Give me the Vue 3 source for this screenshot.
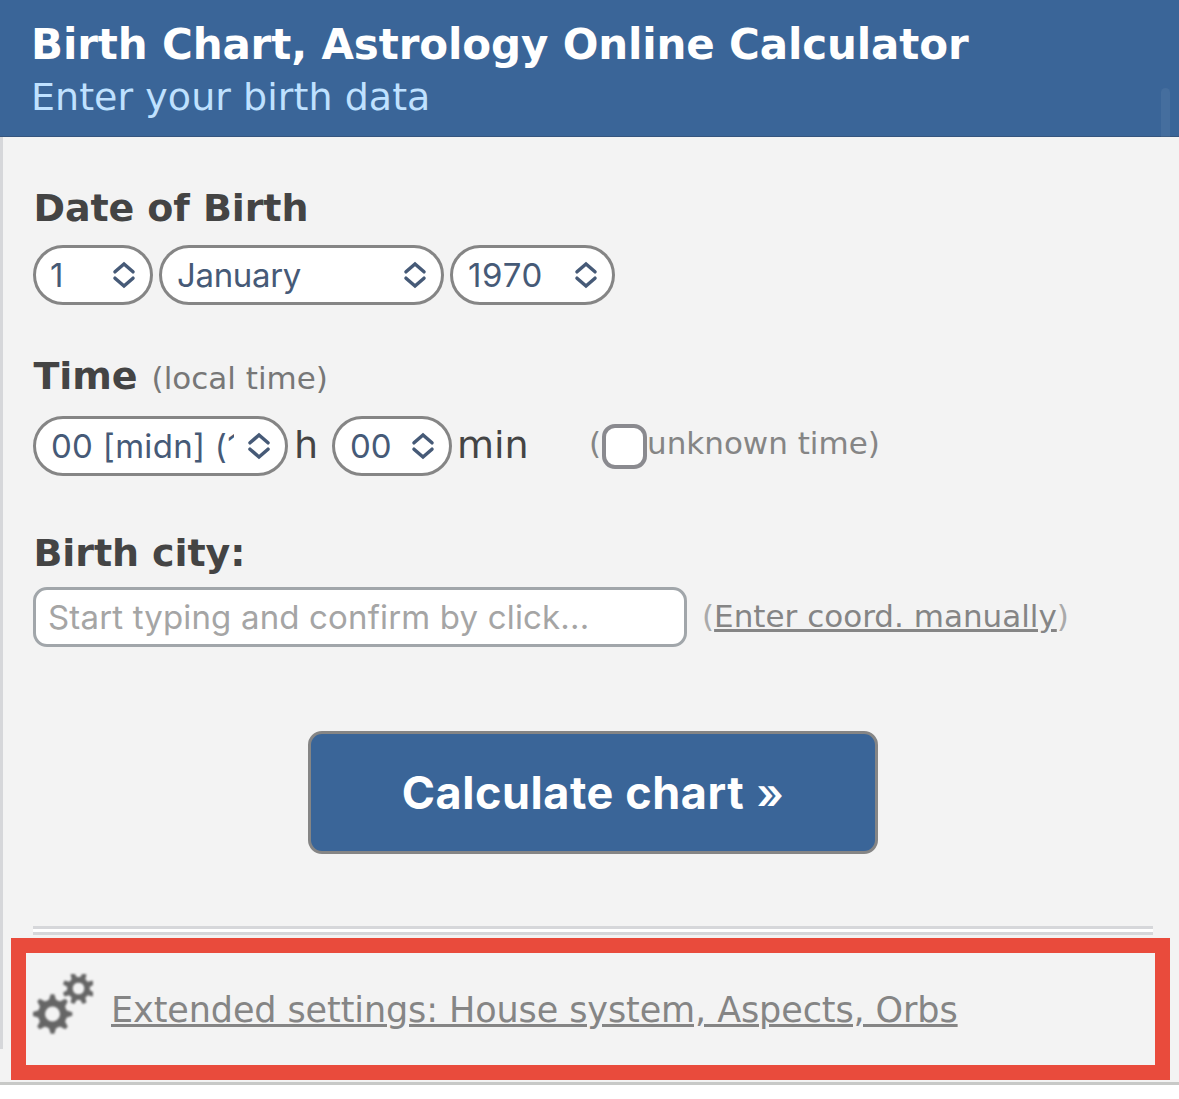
<template>
  <div class="page">
    <header class="header">
      <h1>Birth Chart, Astrology Online Calculator</h1>
      <p>Enter your birth data</p>
      <div class="scroll-thumb"></div>
    </header>

    <form class="birth-form" @submit.prevent>
      <h2 class="date-title">Date of Birth</h2>
      <div class="row date-row">
        <span v-for="field in dateFields" :key="field.name" class="select" :class="field.name">
          <select v-model="form[field.name]">
            <option v-for="opt in field.options" :key="opt" :value="opt">{{ opt }}</option>
          </select>
          <svg class="arrows" viewBox="0 0 24 28"><path d="M3 10.8 12 3 21 10.8M3 17.2 12 25 21 17.2" /></svg>
        </span>
      </div>

      <h2 class="time-title">Time <small>(local time)</small></h2>
      <div class="row time-row">
        <span class="select hour">
          <select v-model="form.hour">
            <option v-for="opt in hours" :key="opt" :value="opt">{{ opt }}</option>
          </select>
          <svg class="arrows" viewBox="0 0 24 28"><path d="M3 10.8 12 3 21 10.8M3 17.2 12 25 21 17.2" /></svg>
        </span>
        <span class="unit unit-h">h</span>
        <span class="select minute">
          <select v-model="form.minute">
            <option v-for="opt in minutes" :key="opt" :value="opt">{{ opt }}</option>
          </select>
          <svg class="arrows" viewBox="0 0 24 28"><path d="M3 10.8 12 3 21 10.8M3 17.2 12 25 21 17.2" /></svg>
        </span>
        <span class="unit unit-min">min</span>
        <label class="unknown">
          <span class="paren">(</span>
          <input type="checkbox" v-model="form.unknownTime" />
          <span class="unknown-text">unknown time)</span>
        </label>
      </div>

      <h2 class="city-title">Birth city:</h2>
      <div class="row city-row">
        <input class="city" type="text" v-model="form.city" placeholder="Start typing and confirm by click..." />
        <span class="manual">(<a href="#">Enter coord. manually</a>)</span>
      </div>

      <button class="submit" type="submit">Calculate chart <span>»</span></button>

      <div class="divider"></div>

      <div class="extended">
        <svg class="gears" viewBox="0 0 60 60">
          <g transform="translate(19.5 40)">
            <circle r="11" />
            <path v-for="a in teeth" :key="a" :transform="`rotate(${a})`" d="M-4-13 -1.8-19.8H1.8L4-13" />
          </g>
          <g transform="translate(45.5 14.5) rotate(22.5)">
            <circle class="small" r="8.6" />
            <path v-for="a in teeth" :key="a" :transform="`rotate(${a})`" d="M-3-10 -2-16H2L3-10" />
          </g>
        </svg>
        <a href="#">Extended settings: House system, Aspects, Orbs</a>
      </div>
    </form>
  </div>
</template>

<script setup>
import { reactive } from 'vue';

const form = reactive({
  day: '1',
  month: 'January',
  year: '1970',
  hour: '00 [midn] (12 AM)',
  minute: '00',
  unknownTime: false,
  city: '',
});

const dateFields = [
  { name: 'day', options: Array.from({ length: 31 }, (_, i) => String(i + 1)) },
  {
    name: 'month',
    options: ['January', 'February', 'March', 'April', 'May', 'June', 'July',
      'August', 'September', 'October', 'November', 'December'],
  },
  { name: 'year', options: Array.from({ length: 100 }, (_, i) => String(1930 + i)) },
];

const pad = (n) => String(n).padStart(2, '0');
const hours = Array.from({ length: 24 }, (_, i) => {
  if (i === 0) return '00 [midn] (12 AM)';
  if (i === 12) return '12 [noon] (12 PM)';
  return `${pad(i)} (${i % 12} ${i < 12 ? 'AM' : 'PM'})`;
});
const minutes = Array.from({ length: 60 }, (_, i) => pad(i));

// gear teeth angles
const teeth = [0, 45, 90, 135, 180, 225, 270, 315];
</script>

<style>
body {
  background: #fff;
}
</style>

<style scoped>
.page {
  width: 1179px;
  height: 1099px;
  overflow: hidden;
  font-family: Verdana, "DejaVu Sans", sans-serif;
  color: #444;
}
.header {
  position: relative;
  box-sizing: border-box;
  height: 137px;
  padding: 20px 31px 0;
  background: #3a6598;
  border-bottom: 1px solid #35557e;
}
h1, h2, p { margin: 0; }
h1 {
  font-size: 42px;
  line-height: 50px;
  letter-spacing: -0.13px;
  color: #fff;
  white-space: nowrap;
}
.header p {
  font-size: 38px;
  line-height: 54px;
  letter-spacing: 0.04px;
  color: #bfe1ff;
}
.scroll-thumb {
  position: absolute;
  top: 88px;
  left: 1161px;
  width: 9px;
  height: 467px;
  border-radius: 5px;
  background: rgba(255, 255, 255, 0.06);
}
.birth-form {
  box-sizing: border-box;
  height: 948px;
  padding: 46px 9px 0 11px;
  background: linear-gradient(#d6d7da, #d6d7da) 0 0 / 3px 912px no-repeat #f3f3f3;
  border-bottom: 3px solid #c8c9c7;
}
h2 {
  height: 50px;
  padding-left: 22.5px;
  font-size: 38px;
  line-height: 50px;
  letter-spacing: -0.1px;
  white-space: nowrap;
}
h2 small {
  margin-left: 1px;
  font-size: 31px;
  font-weight: normal;
  letter-spacing: 0;
  color: #777;
}
.row {
  display: flex;
  height: 60px;
  padding-left: 22px;
  white-space: nowrap;
}
.date-row { gap: 6px; margin-top: 12px; }
.time-title { margin-top: 46px; }
.time-row { margin-top: 15px; }
.city-title { margin-top: 52px; }
.city-row { margin-top: 9px; }

.select {
  position: relative;
  display: block;
  height: 60px;
}
.day, .minute { width: 120px; }
.month { width: 285px; }
.year { width: 165px; }
.hour { width: 255px; }
select {
  appearance: none;
  box-sizing: border-box;
  width: 100%;
  height: 60px;
  padding: 0 50px 0 15px;
  border: 3px solid #858585;
  border-radius: 30px;
  background: #fff;
  color: #465a77;
  font-family: Inter, sans-serif;
  font-size: 33px;
  text-overflow: clip;
}
.day select { padding-left: 14px; }
.month select { letter-spacing: -0.35px; }
.year select { letter-spacing: 0.7px; }
.hour select {
  padding-right: 51px;
  letter-spacing: 0.3px;
}
.arrows {
  position: absolute;
  top: 16px;
  right: 17px;
  width: 24px;
  height: 28px;
  fill: none;
  stroke: #465a77;
  stroke-width: 3.5;
  stroke-linecap: round;
  stroke-linejoin: miter;
}
.unit {
  font-size: 38px;
  line-height: 58px;
}
.unit-h { width: 38px; margin-left: 6px; }
.unit-min { width: 132px; margin-left: 5px; }
.unknown {
  display: flex;
  font-size: 31px;
  line-height: 54px;
  color: #858585;
}
.unknown .paren { width: 13px; }
.unknown input {
  appearance: none;
  box-sizing: border-box;
  width: 45px;
  height: 45px;
  margin: 8px 0 0;
  border: 4px solid #8a8a8f;
  border-radius: 13px;
  background: #fff;
}
.city {
  box-sizing: border-box;
  width: 654px;
  height: 60px;
  padding: 0 12px;
  border: 3px solid #a1a6aa;
  border-radius: 14px;
  background: #fff;
  font-family: Inter, sans-serif;
  font-size: 33px;
  letter-spacing: 0.16px;
}
.city::placeholder { color: #a5a5a5; }
.manual {
  margin-left: 15px;
  font-size: 31px;
  line-height: 58px;
  color: #aaa;
}
a {
  color: #858585;
  text-decoration: underline;
}
.submit {
  display: block;
  width: 570px;
  height: 123px;
  margin: 84px 0 0 297px;
  padding: 0;
  border: 3px solid #858585;
  border-radius: 14px;
  background: #3a6598;
  color: #fff;
  font-family: Inter, sans-serif;
  font-size: 45px;
  font-weight: 700;
  letter-spacing: 0.55px;
}
.submit span {
  margin-left: 1px;
  font-size: 43px;
  font-weight: 600;
}
.divider {
  box-sizing: border-box;
  width: 1120px;
  height: 9px;
  margin: 72px 0 3px 22px;
  border: solid #d6d7da;
  border-width: 3px 0;
  background: #fff;
}
.extended {
  display: flex;
  align-items: center;
  box-sizing: border-box;
  height: 142px;
  padding-left: 7px;
  border: 15px solid #e94b3c;
  white-space: nowrap;
}
.gears {
  width: 60px;
  height: 60px;
  margin: -10px 18px 0 0;
  filter: blur(0.8px);
}
.gears circle { fill: none; stroke: #666; stroke-width: 7; }
.gears circle.small { stroke-width: 5.5; }
.gears path { fill: #666; }
.extended a {
  padding-top: 2px;
  font-size: 35px;
  line-height: 50px;
  letter-spacing: -0.1px;
}
</style>
